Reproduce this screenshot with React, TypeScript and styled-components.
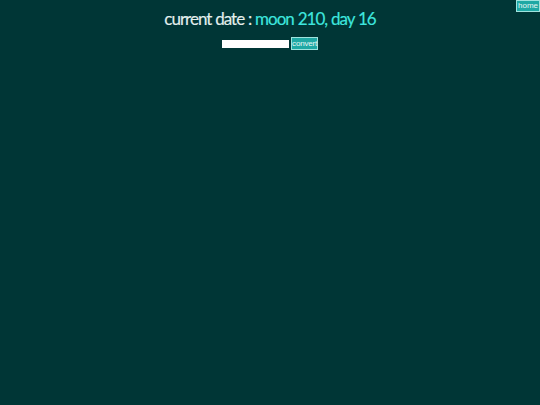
import { FC } from "react";
import styled, { createGlobalStyle } from "styled-components";

const GlobalStyle = createGlobalStyle`
  html, body {
    margin: 0;
    padding: 0;
    background: #003636;
    height: 100%;
  }
  body {
    font-family: "Lato", "Open Sans", sans-serif;
    color: #e8f2f0;
  }
`;

const Page = styled.div`
  position: relative;
  width: 100%;
  min-height: 405px;
  display: flex;
  flex-direction: column;
  align-items: center;
`;

const HomeButton = styled.button`
  position: absolute;
  top: 0;
  right: 0;
  height: 12px;
  padding: 0 1px;
  background: #1fa8a4;
  color: #e6f7f5;
  border: 1px solid #9fe3de;
  font-family: "Liberation Sans", sans-serif;
  font-size: 8px;
  line-height: 10px;
  cursor: pointer;
`;

const Title = styled.h1`
  margin: 8px 0 0;
  font-size: 17px;
  font-weight: 400;
  letter-spacing: -1px;
  word-spacing: 0.5px;
  line-height: 22px;
  color: #e3efed;
  -webkit-text-stroke: 0.15px currentColor;
`;

const DateValue = styled.span`
  color: #3ee6df;
`;

const Form = styled.form`
  margin-top: 7px;
  display: flex;
  align-items: center;
  gap: 2px;
`;

const Input = styled.input`
  width: 67px;
  height: 8px;
  padding: 0;
  border: none;
  background: #ffffff;
  outline: none;
`;

const ConvertButton = styled.button`
  height: 13px;
  padding: 0;
  background: #1fa8a4;
  color: #e6f7f5;
  border: 1px solid #9fe3de;
  font-family: "Liberation Sans", sans-serif;
  font-size: 8px;
  letter-spacing: -0.2px;
  line-height: 10px;
  cursor: pointer;
`;

const App: FC = () => {
  return (
    <>
      <GlobalStyle />
      <Page>
        <HomeButton type="button">home</HomeButton>
        <Title>
          current date : <DateValue>moon 210, day 16</DateValue>
        </Title>
        <Form onSubmit={(e) => e.preventDefault()}>
          <Input type="text" />
          <ConvertButton type="submit">convert</ConvertButton>
        </Form>
      </Page>
    </>
  );
};

export default App;
